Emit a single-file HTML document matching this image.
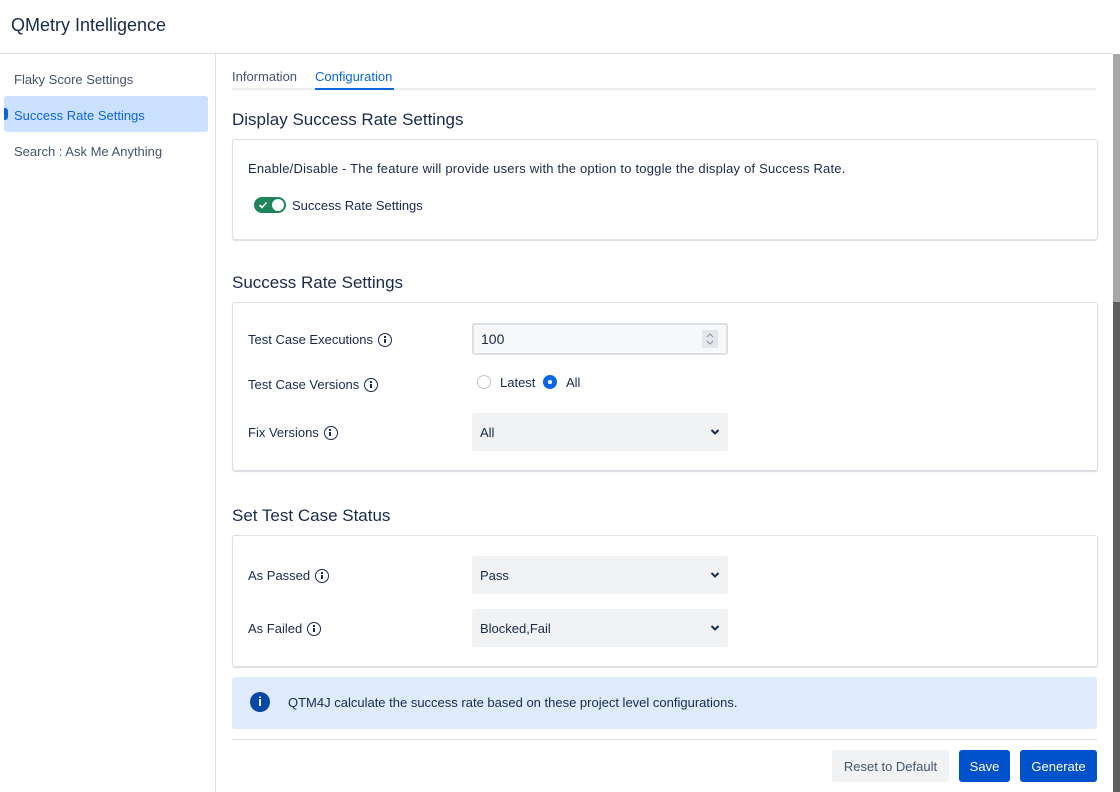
<!DOCTYPE html>
<html><head><meta charset="utf-8"><style>
*{box-sizing:border-box;margin:0;padding:0}
body{width:1120px;height:792px;overflow:hidden;background:#fff;font-family:"Liberation Sans",sans-serif;color:#172b4d;position:relative}
.a{position:absolute}
.t13{font-size:13px}
.card{position:absolute;left:232px;width:866px;border:1px solid #dcdfe4;border-radius:3px;box-shadow:0 1px 1px rgba(9,30,66,.15)}
.h{position:absolute;left:232px;font-size:17px;color:#172b4d}
.lbl{position:absolute;left:248px;font-size:13px;color:#172b4d;display:flex;align-items:center;gap:5px}
.ic{width:14px;height:14px;border:1.5px solid #172b4d;border-radius:50%;position:relative;display:inline-block}
.ic:before{content:"";position:absolute;left:4.5px;top:2px;width:2px;height:2px;background:#172b4d}
.ic:after{content:"";position:absolute;left:4.5px;top:5px;width:2px;height:4.5px;background:#172b4d}
.sel{position:absolute;left:472px;width:256px;height:38px;background:#f1f2f4;border-radius:3px;font-size:13px;padding:0 8px;display:flex;align-items:center;justify-content:space-between}
.btn{position:absolute;top:750px;height:32px;border-radius:3px;font-size:13px;display:flex;align-items:center;justify-content:center}
</style></head><body>
<div class="a" style="left:11px;top:15px;font-size:18px;color:#172b4d">QMetry Intelligence</div>
<div class="a" style="left:0;top:53px;width:1113px;height:1px;background:#dcdfe4"></div>
<div class="a" style="left:215px;top:54px;width:1px;height:738px;background:#dcdfe4"></div>
<div class="a" style="left:1113px;top:54px;width:7px;height:248px;background:#a8a8a8"></div>
<div class="a" style="left:1113px;top:302px;width:7px;height:490px;background:#5f5f5f"></div>
<div class="a t13" style="left:14px;top:72px;color:#44546f">Flaky Score Settings</div>
<div class="a" style="left:4px;top:96px;width:204px;height:36px;background:#cce0ff;border-radius:3px"></div>
<div class="a" style="left:4px;top:108px;width:4px;height:12px;background:#0c66e4;border-radius:0 3px 3px 0"></div>
<div class="a t13" style="left:14px;top:108px;color:#0c66e4">Success Rate Settings</div>
<div class="a t13" style="left:14px;top:144px;color:#44546f">Search : Ask Me Anything</div>
<div class="a" style="left:232px;top:88px;width:864px;height:2px;background:#ebecf0"></div>
<div class="a t13" style="left:232px;top:69px;color:#44546f">Information</div>
<div class="a t13" style="left:315px;top:69px;color:#0c66e4">Configuration</div>
<div class="a" style="left:315px;top:88px;width:79px;height:2px;background:#0c66e4"></div>
<div class="h" style="top:110px">Display Success Rate Settings</div>
<div class="card" style="top:139px;height:101px"></div>
<div class="a t13" style="left:248px;top:161px;letter-spacing:0.2px">Enable/Disable - The feature will provide users with the option to toggle the display of Success Rate.</div>
<div class="a" style="left:254px;top:197px;width:32px;height:16px;background:#1f845a;border-radius:8px"></div>
<div class="a" style="left:272px;top:199px;width:12px;height:12px;background:#fff;border-radius:50%"></div>
<svg class="a" style="left:258px;top:200px" width="10" height="10"><path d="M1.5 5l2.5 2.5 4.5-5" stroke="#fff" stroke-width="1.6" fill="none"/></svg>
<div class="a t13" style="left:292px;top:198px">Success Rate Settings</div>
<div class="h" style="top:273px">Success Rate Settings</div>
<div class="card" style="top:302px;height:169px"></div>
<div class="lbl" style="top:332px">Test Case Executions <span class="ic"></span></div>
<div class="a" style="left:472px;top:323px;width:256px;height:32px;background:#f7f8f9;border:2px solid #dcdfe4;border-radius:3px;font-size:14px;padding:6px 7px">100</div>
<div class="a" style="left:702px;top:330px;width:16px;height:18px;background:#e4e6ea"></div>
<svg class="a" style="left:705px;top:331px" width="10" height="16"><path d="M2 6l3-3 3 3M2 10l3 3 3-3" stroke="#8590a2" fill="none"/></svg>
<div class="lbl" style="top:377px">Test Case Versions <span class="ic"></span></div>
<div class="a" style="left:477px;top:375px;width:14px;height:14px;border:1px solid #c1c7d0;border-radius:50%"></div>
<div class="a t13" style="left:500px;top:375px">Latest</div>
<div class="a" style="left:543px;top:375px;width:14px;height:14px;background:#0c66e4;border-radius:50%"></div>
<div class="a" style="left:548px;top:380px;width:4px;height:4px;background:#fff;border-radius:50%"></div>
<div class="a t13" style="left:566px;top:375px">All</div>
<div class="lbl" style="top:425px">Fix Versions <span class="ic"></span></div>
<div class="sel" style="top:413px">All<svg width="10" height="8"><path d="M1.5 2l3.5 3.5 3.5-3.5" stroke="#172b4d" stroke-width="2" fill="none"/></svg></div>
<div class="h" style="top:506px">Set Test Case Status</div>
<div class="card" style="top:535px;height:132px"></div>
<div class="lbl" style="top:568px">As Passed <span class="ic"></span></div>
<div class="sel" style="top:556px">Pass<svg width="10" height="8"><path d="M1.5 2l3.5 3.5 3.5-3.5" stroke="#172b4d" stroke-width="2" fill="none"/></svg></div>
<div class="lbl" style="top:621px">As Failed <span class="ic"></span></div>
<div class="sel" style="top:609px">Blocked,Fail<svg width="10" height="8"><path d="M1.5 2l3.5 3.5 3.5-3.5" stroke="#172b4d" stroke-width="2" fill="none"/></svg></div>
<div class="a" style="left:232px;top:677px;width:865px;height:52px;background:#dfeafc;border-radius:3px"></div>
<div class="a" style="left:250px;top:692px;width:20px;height:20px;background:#0747a6;border-radius:50%;color:#fff;font-size:13px;font-weight:bold;text-align:center;line-height:20px">i</div>
<div class="a t13" style="left:288px;top:695px">QTM4J calculate the success rate based on these project level configurations.</div>
<div class="a" style="left:232px;top:739px;width:865px;height:1px;background:#dcdfe4"></div>
<div class="btn" style="left:832px;width:117px;background:#f1f2f4;color:#44546f">Reset to Default</div>
<div class="btn" style="left:959px;width:51px;background:#0052cc;color:#fff">Save</div>
<div class="btn" style="left:1020px;width:77px;background:#0052cc;color:#fff">Generate</div>
</body></html>
